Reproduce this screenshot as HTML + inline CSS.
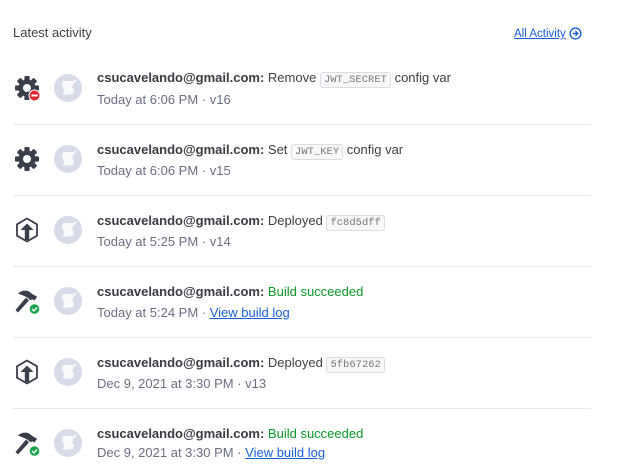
<!DOCTYPE html>
<html><head><style>
body{margin:0;width:629px;height:465px;background:#fff;font-family:"Liberation Sans",sans-serif;overflow:hidden;position:relative;color:#3f3f44}
.h{position:absolute;left:13px;top:25px;font-size:13px;color:#3f3f44}
.all{position:absolute;left:514px;top:27px;font-size:11.5px;color:#1a5fd9;text-decoration:underline}
.all svg{vertical-align:-3px;margin-left:3px}
.sep{position:absolute;left:13px;width:578px;height:1px;background:#e8e9ee}
.ic{position:absolute;left:13px;width:28px;height:28px}
.av{position:absolute;left:54px;width:28px;height:28px;border-radius:50%;background:#d8dbe8}
.l1{position:absolute;left:97px;font-size:13px;color:#3f3f44;white-space:nowrap}
.l1 b{color:#3a3a42}
.l2{position:absolute;left:97px;font-size:13px;color:#6b6e82;white-space:nowrap}
code{font-family:"Liberation Mono",monospace;font-size:10.5px;color:#777;background:#f7f8fa;border:1px solid #dcdde3;border-radius:3px;padding:1px 3px}
.g{color:#0a9a2a}
a{color:#1a5fd9;text-decoration:underline}
</style></head><body>
<div class="h">Latest activity</div>
<div class="all">All Activity<svg width="13" height="13" viewBox="0 0 14 14"><circle cx="7" cy="7" r="5.8" fill="none" stroke="#1a5fd9" stroke-width="1.5"/><path d="M4 7h5M7 4.6L9.4 7 7 9.4" fill="none" stroke="#1a5fd9" stroke-width="1.6"/></svg></div>

<svg width="0" height="0" style="position:absolute"><defs>
<g id="gear"><g fill="#3a3d4a" transform="translate(14 14)">
<rect x="-2.6" y="-12" width="5.2" height="24" rx="1"/>
<rect x="-2.6" y="-12" width="5.2" height="24" rx="1" transform="rotate(45)"/>
<rect x="-2.6" y="-12" width="5.2" height="24" rx="1" transform="rotate(90)"/>
<rect x="-2.6" y="-12" width="5.2" height="24" rx="1" transform="rotate(135)"/>
<circle r="8.5"/></g><circle cx="14" cy="14" r="4" fill="#fff"/></g>
<g id="dep"><path d="M14 2.5l10 5.8v11.4l-10 5.8-10-5.8V8.3z" fill="none" stroke="#3a3d4a" stroke-width="1.8" stroke-linejoin="round"/><path d="M14 7.5l6.5 6.5h-4.3v10h-4.4v-10H7.5z" fill="#3a3d4a"/></g>
<g id="ham"><path d="M5 6.5c3-3 8-3.5 11-2l4 3 3 1.5 1 1-2.5 3.5-1.5-1-3 0.5-2-2c-2-1.5-5-2.5-10-4.5z" fill="#3a3d4a"/><path d="M13 10.5l3 3L5 25.5 2.5 23z" fill="#3a3d4a"/></g>
<g id="av"><path d="M9 7h10v4l-1 3 2 1-1 5-10 1 1-5-2-5z" fill="#fff" opacity=".85"/><path d="M19 9l3-3" stroke="#fff" stroke-width="2" opacity=".85"/></g>
</defs></svg>

<svg class="ic" style="top:74px" viewBox="0 0 28 28"><use href="#gear"/><circle cx="21.5" cy="21.5" r="5.5" fill="#e0252f" stroke="#fff" stroke-width="1"/><rect x="18.3" y="20.5" width="6.4" height="2" fill="#fff"/></svg>
<div class="av" style="top:74px"><svg width="28" height="28"><use href="#av"/></svg></div>
<div class="l1" style="top:70px"><b>csucavelando@gmail.com:</b> Remove <code>JWT_SECRET</code> config var</div>
<div class="l2" style="top:92px">Today at 6:06 PM · v16</div>
<div class="sep" style="top:124px"></div>

<svg class="ic" style="top:145px" viewBox="0 0 28 28"><use href="#gear"/></svg>
<div class="av" style="top:145px"><svg width="28" height="28"><use href="#av"/></svg></div>
<div class="l1" style="top:142px"><b>csucavelando@gmail.com:</b> Set <code>JWT_KEY</code> config var</div>
<div class="l2" style="top:163px">Today at 6:06 PM · v15</div>
<div class="sep" style="top:195px"></div>

<svg class="ic" style="top:216px" viewBox="0 0 28 28"><use href="#dep"/></svg>
<div class="av" style="top:216px"><svg width="28" height="28"><use href="#av"/></svg></div>
<div class="l1" style="top:213px"><b>csucavelando@gmail.com:</b> Deployed <code>fc8d5dff</code></div>
<div class="l2" style="top:234px">Today at 5:25 PM · v14</div>
<div class="sep" style="top:266px"></div>

<svg class="ic" style="top:287px" viewBox="0 0 28 28"><use href="#ham"/><circle cx="21.5" cy="22" r="5.3" fill="#16a34a" stroke="#fff" stroke-width="1"/><path d="M19 22l2 2 3-3.5" fill="none" stroke="#fff" stroke-width="1.4"/></svg>
<div class="av" style="top:287px"><svg width="28" height="28"><use href="#av"/></svg></div>
<div class="l1" style="top:284px"><b>csucavelando@gmail.com:</b> <span class="g">Build succeeded</span></div>
<div class="l2" style="top:305px">Today at 5:24 PM · <a>View build log</a></div>
<div class="sep" style="top:337px"></div>

<svg class="ic" style="top:358px" viewBox="0 0 28 28"><use href="#dep"/></svg>
<div class="av" style="top:358px"><svg width="28" height="28"><use href="#av"/></svg></div>
<div class="l1" style="top:355px"><b>csucavelando@gmail.com:</b> Deployed <code>5fb67262</code></div>
<div class="l2" style="top:376px">Dec 9, 2021 at 3:30 PM · v13</div>
<div class="sep" style="top:408px"></div>

<svg class="ic" style="top:429px" viewBox="0 0 28 28"><use href="#ham"/><circle cx="21.5" cy="22" r="5.3" fill="#16a34a" stroke="#fff" stroke-width="1"/><path d="M19 22l2 2 3-3.5" fill="none" stroke="#fff" stroke-width="1.4"/></svg>
<div class="av" style="top:429px"><svg width="28" height="28"><use href="#av"/></svg></div>
<div class="l1" style="top:426px"><b>csucavelando@gmail.com:</b> <span class="g">Build succeeded</span></div>
<div class="l2" style="top:445px">Dec 9, 2021 at 3:30 PM · <a>View build log</a></div>
</body></html>
